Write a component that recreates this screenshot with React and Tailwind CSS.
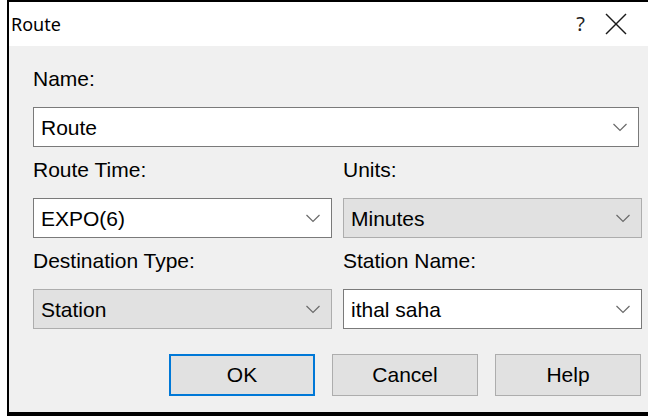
const Chevron = () => (
  <svg width="16" height="9" viewBox="0 0 16 9" fill="none">
    <polyline points="1.5,1 8,7.5 14.5,1" stroke="#6a6a6a" strokeWidth="1.2" />
  </svg>
);

const Combo = ({ value, readOnly = false, className = '' }) => (
  <div
    className={`h-[40px] flex items-center justify-between pl-[7px] pr-[10px] border ${
      readOnly ? 'bg-[#e1e1e1] border-[#adadad]' : 'bg-white border-[#7a7a7a]'
    } ${className}`}
  >
    <span className="leading-none">{value}</span>
    <Chevron />
  </div>
);

const Field = ({ label, children }) => (
  <div className="flex flex-col">
    <div className="h-[24px] leading-[24px] mb-[16px]">{label}</div>
    {children}
  </div>
);

const Button = ({ children, primary = false }) => (
  <button
    className={`w-[146px] h-[42px] bg-[#e1e1e1] text-black ${
      primary ? 'border-2 border-[#0078d7]' : 'border border-[#adadad]'
    }`}
  >
    {children}
  </button>
);

export default function App() {
  return (
    <div className="w-[648px] h-[416px] bg-white pl-[7px]">
      <div className="h-full flex flex-col border-l-2 border-t-2 border-b-4 border-black">
        {/* title bar */}
        <div className="h-[44px] bg-white flex items-center justify-between pl-[2px] pr-[21px] font-['Noto_Sans',sans-serif] text-[18px] text-black">
          <span>Route</span>
          <div className="flex items-center gap-[20px]">
            <span className="text-[20px] text-[#222]">?</span>
            <svg width="22" height="22" viewBox="0 0 22 22">
              <line x1="1" y1="1" x2="21" y2="21" stroke="#1a1a1a" strokeWidth="1.4" />
              <line x1="21" y1="1" x2="1" y2="21" stroke="#1a1a1a" strokeWidth="1.4" />
            </svg>
          </div>
        </div>

        {/* client area */}
        <div className="flex-1 bg-[#f0f0f0] pt-[21px] pl-[24px] pr-[6px] flex flex-col font-['Liberation_Sans',Arial,sans-serif] text-[21px] text-black">
          <Field label="Name:">
            <Combo value="Route" className="mr-[3px]" />
          </Field>

          <div className="grid grid-cols-2 gap-x-[11px] mt-[11px]">
            <Field label="Route Time:">
              <Combo value="EXPO(6)" />
            </Field>
            <Field label="Units:">
              <Combo value="Minutes" readOnly />
            </Field>
          </div>

          <div className="grid grid-cols-2 gap-x-[11px] mt-[11px]">
            <Field label="Destination Type:">
              <Combo value="Station" readOnly />
            </Field>
            <Field label="Station Name:">
              <Combo value="ithal saha" />
            </Field>
          </div>

          <div className="flex justify-end gap-[17px] mt-[25px] pr-[1px]">
            <Button primary>OK</Button>
            <Button>Cancel</Button>
            <Button>Help</Button>
          </div>
        </div>
      </div>
    </div>
  );
}
